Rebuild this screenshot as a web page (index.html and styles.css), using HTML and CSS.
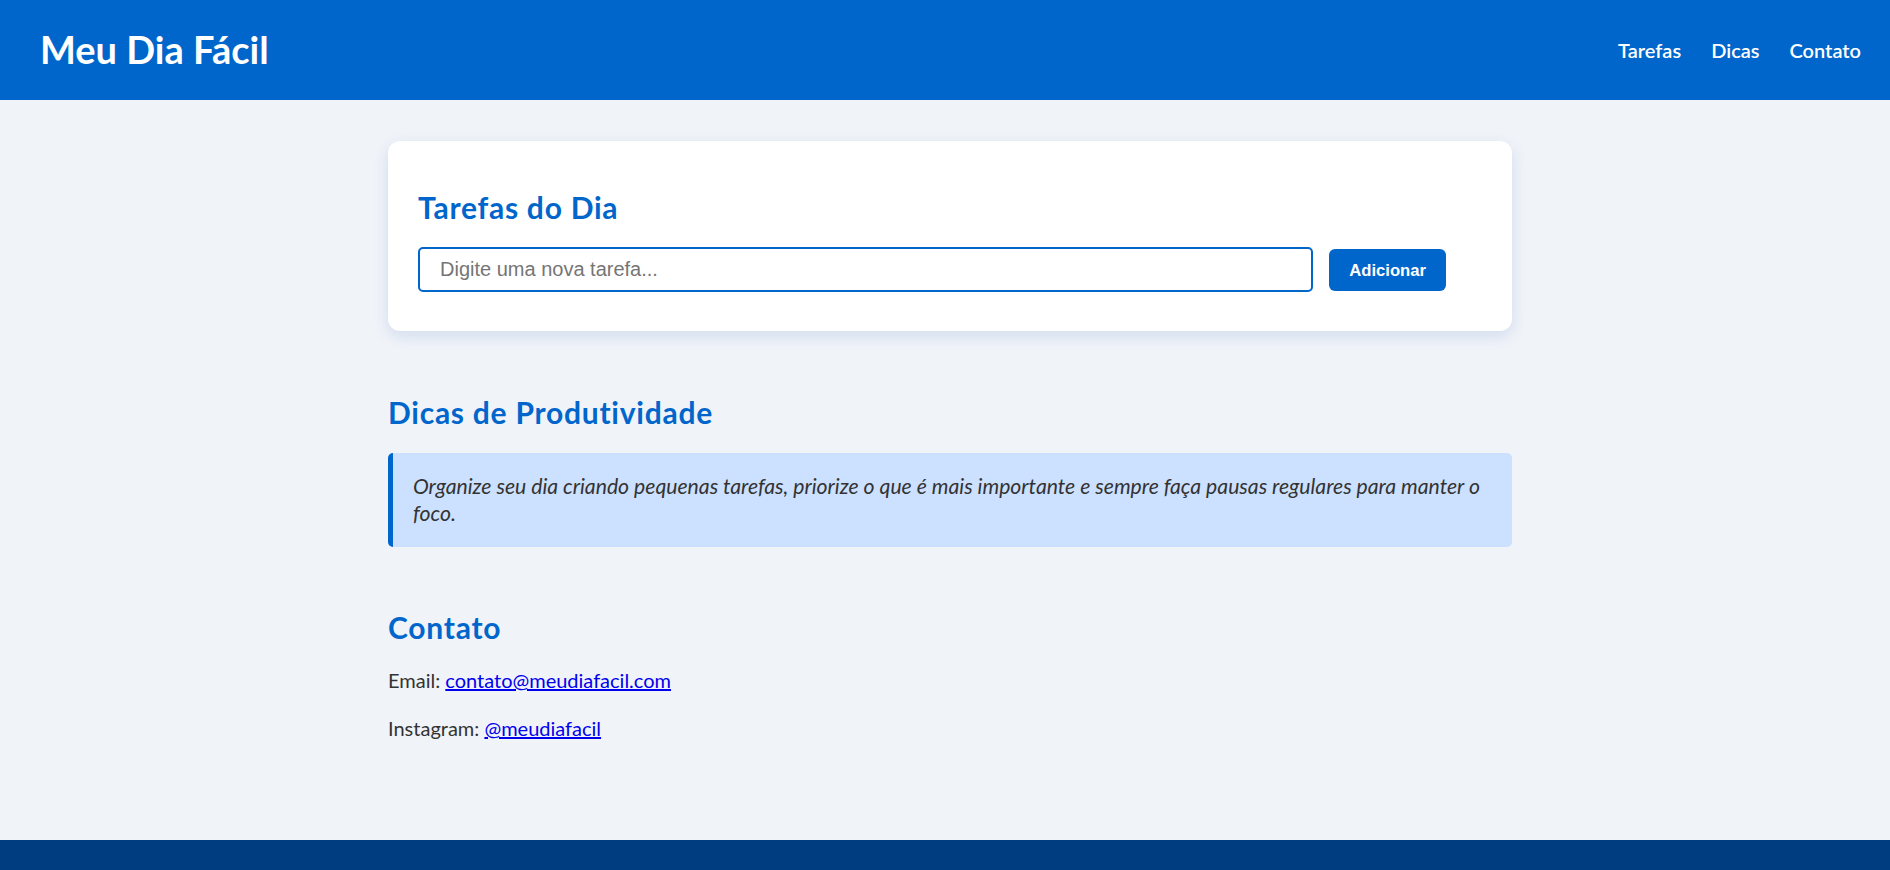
FILE: index.html
```html
<!DOCTYPE html>
<html lang="pt-BR">
<head>
<meta charset="utf-8">
<title>Meu Dia Fácil</title>
<link rel="stylesheet" href="styles.css">
</head>
<body>
<header class="topbar">
  <h1 class="logo">Meu Dia Fácil</h1>
  <nav class="nav">
    <a class="nav-link" href="#tarefas">Tarefas</a>
    <a class="nav-link" href="#dicas">Dicas</a>
    <a class="nav-link" href="#contato">Contato</a>
  </nav>
</header>
<main class="main">
  <section class="card" id="tarefas">
    <h2 class="card-title">Tarefas do Dia</h2>
    <form class="task-form">
      <input class="task-input" type="text" placeholder="Digite uma nova tarefa...">
      <button class="task-btn" type="button">Adicionar</button>
    </form>
  </section>
  <section class="tips" id="dicas">
    <h2 class="section-title">Dicas de Produtividade</h2>
    <div class="tip">
      <p class="tip-text">Organize seu dia criando pequenas tarefas, priorize o que é mais importante e sempre faça pausas regulares para manter o foco.</p>
    </div>
  </section>
  <section class="contact" id="contato">
    <h2 class="section-title">Contato</h2>
    <p class="contact-line">Email: <a class="contact-link" href="#">contato@meudiafacil.com</a></p>
    <p class="contact-line">Instagram: <a class="contact-link" href="#">@meudiafacil</a></p>
  </section>
</main>
<footer class="footer"></footer>
</body>
</html>
```

FILE: styles.css
```css
html, body {
  margin: 0;
  padding: 0;
}

body {
  font-family: "Lato", "Open Sans", sans-serif;
  font-size: 20px;
  color: #333333;
  background: #f0f3f8;
}

.topbar {
  height: 100px;
  box-sizing: border-box;
  background: #0066cc;
  display: flex;
  align-items: center;
  justify-content: space-between;
  padding: 0 29px 0 40px;
}

.logo {
  margin: 0 0 2px 0;
  font-size: 38px;
  font-weight: 700;
  line-height: 1;
  color: #ffffff;
}

.nav {
  display: flex;
  gap: 30px;
}

.nav-link {
  color: #ffffff;
  text-decoration: none;
  font-size: 20px;
  font-weight: 600;
  line-height: 1;
}

.main {
  width: 1124px;
  margin-left: calc(50% - 557px);
  padding: 41px 0 78px;
}

.card {
  background: #ffffff;
  border-radius: 12px;
  padding: 30px;
  box-shadow: 0 5px 15px rgba(0, 80, 180, 0.13);
}

.card-title,
.section-title {
  margin: 0 0 20px;
  font-size: 30px;
  font-weight: 700;
  line-height: 40px;
  letter-spacing: 0.75px;
  color: #0066cc;
}

.card-title {
  margin-top: 16px;
  margin-bottom: 19.6px;
}

.task-form {
  display: flex;
  align-items: baseline;
  gap: 16px;
  margin: 0 0 9.5px;
}

.task-input {
  flex: none;
  width: 80%;
  box-sizing: content-box;
  padding: 9px 20px;
  border: 2px solid #0066cc;
  border-radius: 5px;
  font-family: "Liberation Sans", Arial, sans-serif;
  font-size: 20px;
  line-height: 23px;
  color: #333333;
  background: #ffffff;
  outline: none;
}

.task-input::placeholder {
  color: #757575;
}

.task-btn {
  flex: none;
  padding: 11.4px 20px;
  border: none;
  border-radius: 6px;
  background: #0066cc;
  color: #ffffff;
  font-family: "Liberation Sans", Arial, sans-serif;
  font-size: 16.67px;
  font-weight: 700;
  line-height: 19.2px;
  cursor: pointer;
}

.tips {
  margin-top: 61px;
}

.tips .section-title {
  margin-bottom: 20.6px;
}

.tip {
  background: #cce0ff;
  border-left: 5px solid #0066cc;
  border-radius: 5px;
  padding: 20px;
}

.tip-text {
  margin: 0;
  font-style: italic;
  font-size: 21.2px;
  line-height: 27px;
  color: #333333;
}

.contact {
  margin-top: 60.4px;
}

.contact .section-title {
  margin-bottom: 19.2px;
}

.contact-line {
  margin: 0 0 20px;
  font-size: 20px;
  line-height: 28px;
}

.contact-link {
  color: #0000ee;
}

.footer {
  background: #003d80;
  height: 60px;
}
```
